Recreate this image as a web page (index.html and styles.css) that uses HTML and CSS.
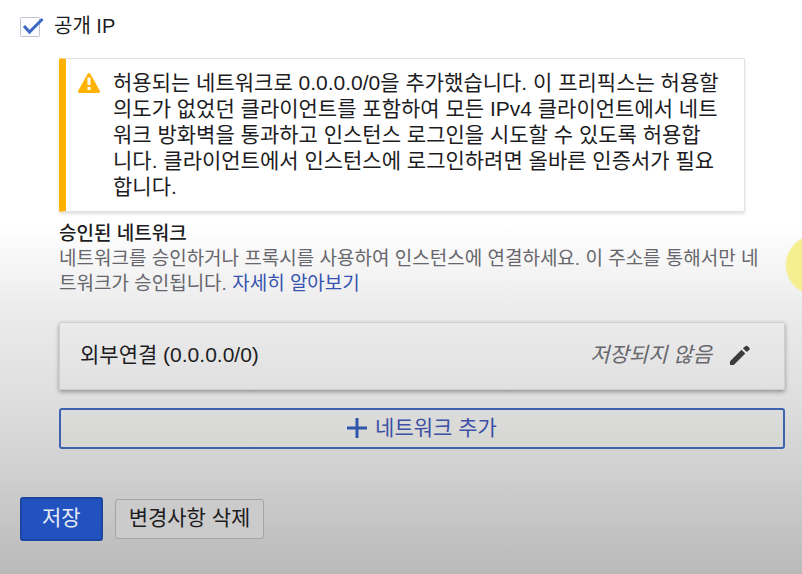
FILE: index.html
```
<!DOCTYPE html>
<html lang="ko">
<head>
    <meta charset="UTF-8">
    <meta name="viewport" content="width=device-width, initial-scale=1.0">
    <title>공개 IP</title>
    <link rel="stylesheet" href="styles.css">
</head>
<body>
    <form class="page">
        <label class="check">
            <input type="checkbox" class="check-input" checked>
            <svg class="check-box" width="26" height="24" viewBox="0 0 26 24">
                <rect x="0.500" y="3.500" width="19" height="19" rx="1" fill="#fdfdff" stroke="#c0c4d0"/>
                <path d="M4 12l5.500 6L22.500 5" fill="none" stroke="#3c68c8" stroke-width="3"/>
            </svg>
            <span>공개 IP</span>
        </label>

        <div class="content">
            <div class="alert" role="alert">
                <svg class="alert-icon" width="24" height="24" viewBox="0 0 24 24">
                    <path d="M12 3.500L21.500 20.500h-19z" fill="#ffb300" stroke="#ffb300" stroke-width="3" stroke-linejoin="round"/>
                    <path d="M12 6.500v7.500M12 16v3" stroke="#fff" stroke-width="3"/>
                </svg>
                <p class="alert-text">허용되는 네트워크로 0.0.0.0/0을 추가했습니다. 이 프리픽스는 허용할 의도가 없었던 클라이언트를 포함하여 모든 IPv4 클라이언트에서 네트워크 방화벽을 통과하고 인스턴스 로그인을 시도할 수 있도록 허용합<br>니다. 클라이언트에서 인스턴스에 로그인하려면 올바른 인증서가 필요<br>합니다.</p>
            </div>

            <h2 class="title">승인된 네트워크</h2>
            <p class="description">네트워크를 승인하거나 프록시를 사용하여 인스턴스에 연결하세요. 이 주소를 통해서만 네<br>트워크가 승인됩니다. <a href="#">자세히 알아보기</a></p>

            <div class="network">
                <span class="network-name">외부연결 (0.0.0.0/0)</span>
                <em class="network-status">저장되지 않음</em>
                <button type="button" class="edit-btn" aria-label="수정">
                    <svg width="24" height="24" viewBox="0 0 24 24">
                        <path d="M2 18.200V22h3.800L17.300 10.500l-3.800-3.800zM21.500 6.800a1.400 1.400 0 0 0 0-1.700L19.400 3a1.400 1.400 0 0 0-1.700 0l-2.800 2.300 3.800 3.800z" fill="#3c3c3e"/>
                    </svg>
                </button>
            </div>

            <button type="button" class="add-btn">
                <svg width="20" height="20" viewBox="0 0 20 20">
                    <path d="M10 0v20M0 10h20" stroke="#2f56ab" stroke-width="3"/>
                </svg>
                네트워크 추가
            </button>
        </div>

        <div class="actions">
            <button type="submit" class="save-btn">저장</button>
            <button type="reset" class="discard-btn">변경사항 삭제</button>
        </div>
    </form>
    <div class="pointer"></div>
</body>
</html>
```
FILE: styles.css
```
* {
    box-sizing: border-box;
}
body {
    margin: 0;
    min-height: 100vh;
    position: relative;
    font-family: "Liberation Sans", "Noto Sans CJK KR", sans-serif;
    font-size: 21px;
    line-height: 26px;
    color: #1c1c22;
    background: linear-gradient(#fff 0, #fff 39%, #ebebeb 54%, #dedede 70%, #d0d0d0 82%, #b9b9b9 100%);
}
button {
    font: inherit;
    cursor: pointer;
}
.page {
    padding: 13px 17px 34px 20px;
}
.check {
    display: flex;
    align-items: center;
    gap: 8px;
    width: fit-content;
    font-size: 20px;
}
.check-input {
    position: absolute;
    opacity: 0;
}
.content {
    margin: 19px 0 0 39px;
}
.alert {
    display: flex;
    align-items: flex-start;
    gap: 12px;
    margin-right: 40px;
    padding: 11px 20px 11px 11px;
    border: 1px solid #e2e2e4;
    border-left: 7px solid #ffb300;
    border-radius: 2px;
    background: #fff;
    box-shadow: 0 2px 3px rgba(0, 0, 0, 0.12);
}
.alert-icon {
    flex: none;
    margin-top: 1px;
}
.alert-text {
    margin: 0;
}
.title {
    margin: 10px 0 0;
    font-size: 19px;
    font-weight: 500;
    line-height: 24px;
}
.description {
    margin: 0;
    font-size: 19px;
    line-height: 25px;
    color: #66666c;
}
.description a {
    color: #3553b0;
    text-decoration: none;
}
.network {
    display: flex;
    align-items: center;
    margin-top: 26px;
    padding: 19px 32px 21px 20px;
    border: 1px solid #cfcfd0;
    border-radius: 2px;
    background: linear-gradient(#ebebeb, #e0e0e0);
    box-shadow: 0 2px 4px rgba(0, 0, 0, 0.35);
}
.network-status {
    margin-left: auto;
    color: #66666c;
}
.edit-btn {
    display: flex;
    margin-left: 16px;
    padding: 0;
    border: 0;
    background: none;
}
.add-btn {
    display: flex;
    align-items: center;
    justify-content: center;
    gap: 8px;
    width: 100%;
    height: 41px;
    margin-top: 18px;
    padding: 0 0 2px;
    border: 2px solid #3f62ae;
    border-radius: 3px;
    background: linear-gradient(#dcdcdc, #d6d6d2);
    color: #3d51a5;
}
.actions {
    display: flex;
    align-items: center;
    gap: 12px;
    margin-top: 48px;
}
.save-btn {
    height: 44px;
    padding: 0 20px 2px;
    border: 2px solid #1c45a0;
    border-radius: 3px;
    background: #2252c0;
    color: #e6eaf4;
}
.discard-btn {
    height: 40px;
    padding: 0 13px 2px;
    border: 1px solid #a4a4a4;
    border-radius: 3px;
    background: #cbcbcb;
    color: #1c1c22;
}
/* highlight around the mouse, cut off by the window edge */
.pointer {
    position: absolute;
    top: 234px;
    right: 0;
    width: 17px;
    height: 62px;
    background: radial-gradient(circle at 31px 31px, #f5ef90 29px, transparent 31px);
}
```
